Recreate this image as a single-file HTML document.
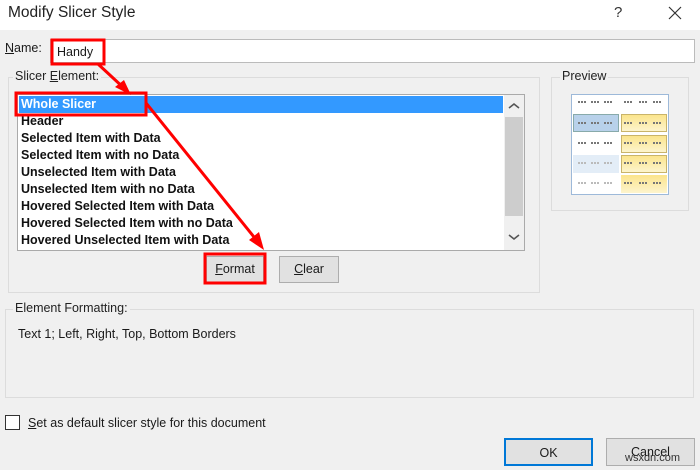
<!DOCTYPE html>
<html><head><style>
*{margin:0;padding:0;box-sizing:border-box}
body{width:700px;height:470px;background:#f0f0f0;font-family:"Liberation Sans",sans-serif;position:relative;overflow:hidden;color:#1a1a1a}
.a{position:absolute}
.t{font-size:12.5px}
.grp{position:absolute;border:1px solid #dcdcdc}
.lbl{position:absolute;background:#f0f0f0;padding:0 2px;font-size:12.5px;color:#222}
.it{position:absolute;left:21px;font-size:12.5px;font-weight:bold;color:#111;white-space:nowrap}
.btn{position:absolute;background:#e1e1e1;border:1px solid #adadad;font-size:12.5px;text-align:center}
.pc{position:absolute;height:18px}
</style></head><body>
<div class="a" style="left:0;top:0;width:700px;height:30px;background:#fff"></div>
<div class="a" style="left:8px;top:4px;font-size:15.5px;color:#222">Modify Slicer Style</div>
<div class="a" style="left:614px;top:4px;font-size:15px;color:#333">?</div>
<svg class="a" style="left:668px;top:6px" width="14" height="14"><path d="M1 1L13 13M13 1L1 13" stroke="#333" stroke-width="1.2"/></svg>

<div class="a t" style="left:5px;top:41px"><u>N</u>ame:</div>
<div class="a" style="left:50px;top:39px;width:645px;height:24px;background:#fff;border:1px solid #bbb"></div>
<div class="a t" style="left:57px;top:45px">Handy</div>

<div class="grp" style="left:8px;top:77px;width:532px;height:216px"></div>
<div class="lbl" style="left:13px;top:69px">Slicer <u>E</u>lement:</div>
<div class="a" style="left:17px;top:94px;width:508px;height:157px;background:#fff;border:1px solid #aaa"></div>
<div class="a" style="left:19px;top:96px;width:484px;height:17px;background:#3399ff"></div>
<div class="a" style="left:504px;top:95px;width:20px;height:155px;background:#f0f0f0"></div>
<div class="a" style="left:505px;top:117px;width:18px;height:99px;background:#cdcdcd"></div>
<svg class="a" style="left:507px;top:102px" width="14" height="8"><path d="M2 6L7 2L12 6" stroke="#555" stroke-width="1.6" fill="none"/></svg>
<svg class="a" style="left:507px;top:233px" width="14" height="8"><path d="M2 2L7 6L12 2" stroke="#555" stroke-width="1.6" fill="none"/></svg>
<div class="it" style="top:97px;color:#fff">Whole Slicer</div>
<div class="it" style="top:114px">Header</div>
<div class="it" style="top:131px">Selected Item with Data</div>
<div class="it" style="top:148px">Selected Item with no Data</div>
<div class="it" style="top:165px">Unselected Item with Data</div>
<div class="it" style="top:182px">Unselected Item with no Data</div>
<div class="it" style="top:199px">Hovered Selected Item with Data</div>
<div class="it" style="top:216px">Hovered Selected Item with no Data</div>
<div class="it" style="top:233px">Hovered Unselected Item with Data</div>

<div class="btn" style="left:206px;top:256px;width:58px;height:27px;line-height:25px"><u>F</u>ormat</div>
<div class="btn" style="left:279px;top:256px;width:60px;height:27px;line-height:25px"><u>C</u>lear</div>

<div class="grp" style="left:551px;top:77px;width:138px;height:134px"></div>
<div class="lbl" style="left:560px;top:69px">Preview</div>
<div class="a" style="left:571px;top:94px;width:98px;height:101px;background:#fff;border:1px solid #9db9d9"></div>
<div class="pc" style="left:573px;top:114px;width:46px;background:#b8d1ea;border:1px solid #8aa"></div>
<div class="pc" style="left:621px;top:114px;width:46px;background:linear-gradient(#fbe48c,#fdf4cd);border:1px solid #c9b46a"></div>
<div class="pc" style="left:621px;top:135px;width:46px;background:linear-gradient(#fbe48c,#fdf4cd);border:1px solid #c9b46a"></div>
<div class="pc" style="left:573px;top:155px;width:46px;background:#e3edf7"></div>
<div class="pc" style="left:621px;top:155px;width:46px;background:linear-gradient(#fbe48c,#fdf4cd);border:1px solid #c9b46a"></div>
<div class="pc" style="left:621px;top:175px;width:46px;background:linear-gradient(#fbe48c,#fdf4cd)"></div>
<svg class="a" style="left:573px;top:96px" width="96" height="100">
<g stroke="#777" stroke-width="2" stroke-dasharray="2 1">
<path d="M5 6h8M18 6h8M31 6h8M51 6h8M66 6h8M80 6h8"/>
<path d="M5 27h8M18 27h8M31 27h8M51 27h8M66 27h8M80 27h8"/>
<path d="M5 47h8M18 47h8M31 47h8M51 47h8M66 47h8M80 47h8"/>
<path d="M51 67h8M66 67h8M80 67h8M51 87h8M66 87h8M80 87h8"/>
</g>
<g stroke="#bbb" stroke-width="2" stroke-dasharray="2 1"><path d="M5 67h8M18 67h8M31 67h8M5 87h8M18 87h8M31 87h8"/></g>
</svg>

<div class="grp" style="left:5px;top:309px;width:689px;height:89px"></div>
<div class="lbl" style="left:13px;top:301px">Element Formatting:</div>
<div class="a t" style="left:18px;top:327px">Text 1; Left, Right, Top, Bottom Borders</div>

<div class="a" style="left:5px;top:415px;width:15px;height:15px;background:#fff;border:1px solid #333"></div>
<div class="a t" style="left:28px;top:416px"><u>S</u>et as default slicer style for this document</div>

<div class="btn" style="left:504px;top:438px;width:89px;height:28px;line-height:26px;border:2px solid #0078d7">OK</div>
<div class="btn" style="left:606px;top:438px;width:89px;height:28px;line-height:26px">Cancel</div>
<div class="a" style="left:625px;top:452px;font-size:11px;color:#333">wsxdn.com</div>

<svg class="a" style="left:0;top:0" width="700" height="470">
<g fill="none" stroke="#f00" stroke-width="3">
<rect x="52" y="40" width="52" height="24"/>
<rect x="16" y="93" width="130" height="22"/>
<rect x="205" y="254" width="60" height="29"/>
<path d="M98 64L126 90"/>
<path d="M146 103L258 242"/>
</g>
<path d="M131 95L115 87L124 80Z" fill="#f00"/>
<path d="M264 250L249 240L259 232Z" fill="#f00"/>
</svg>
</body></html>
